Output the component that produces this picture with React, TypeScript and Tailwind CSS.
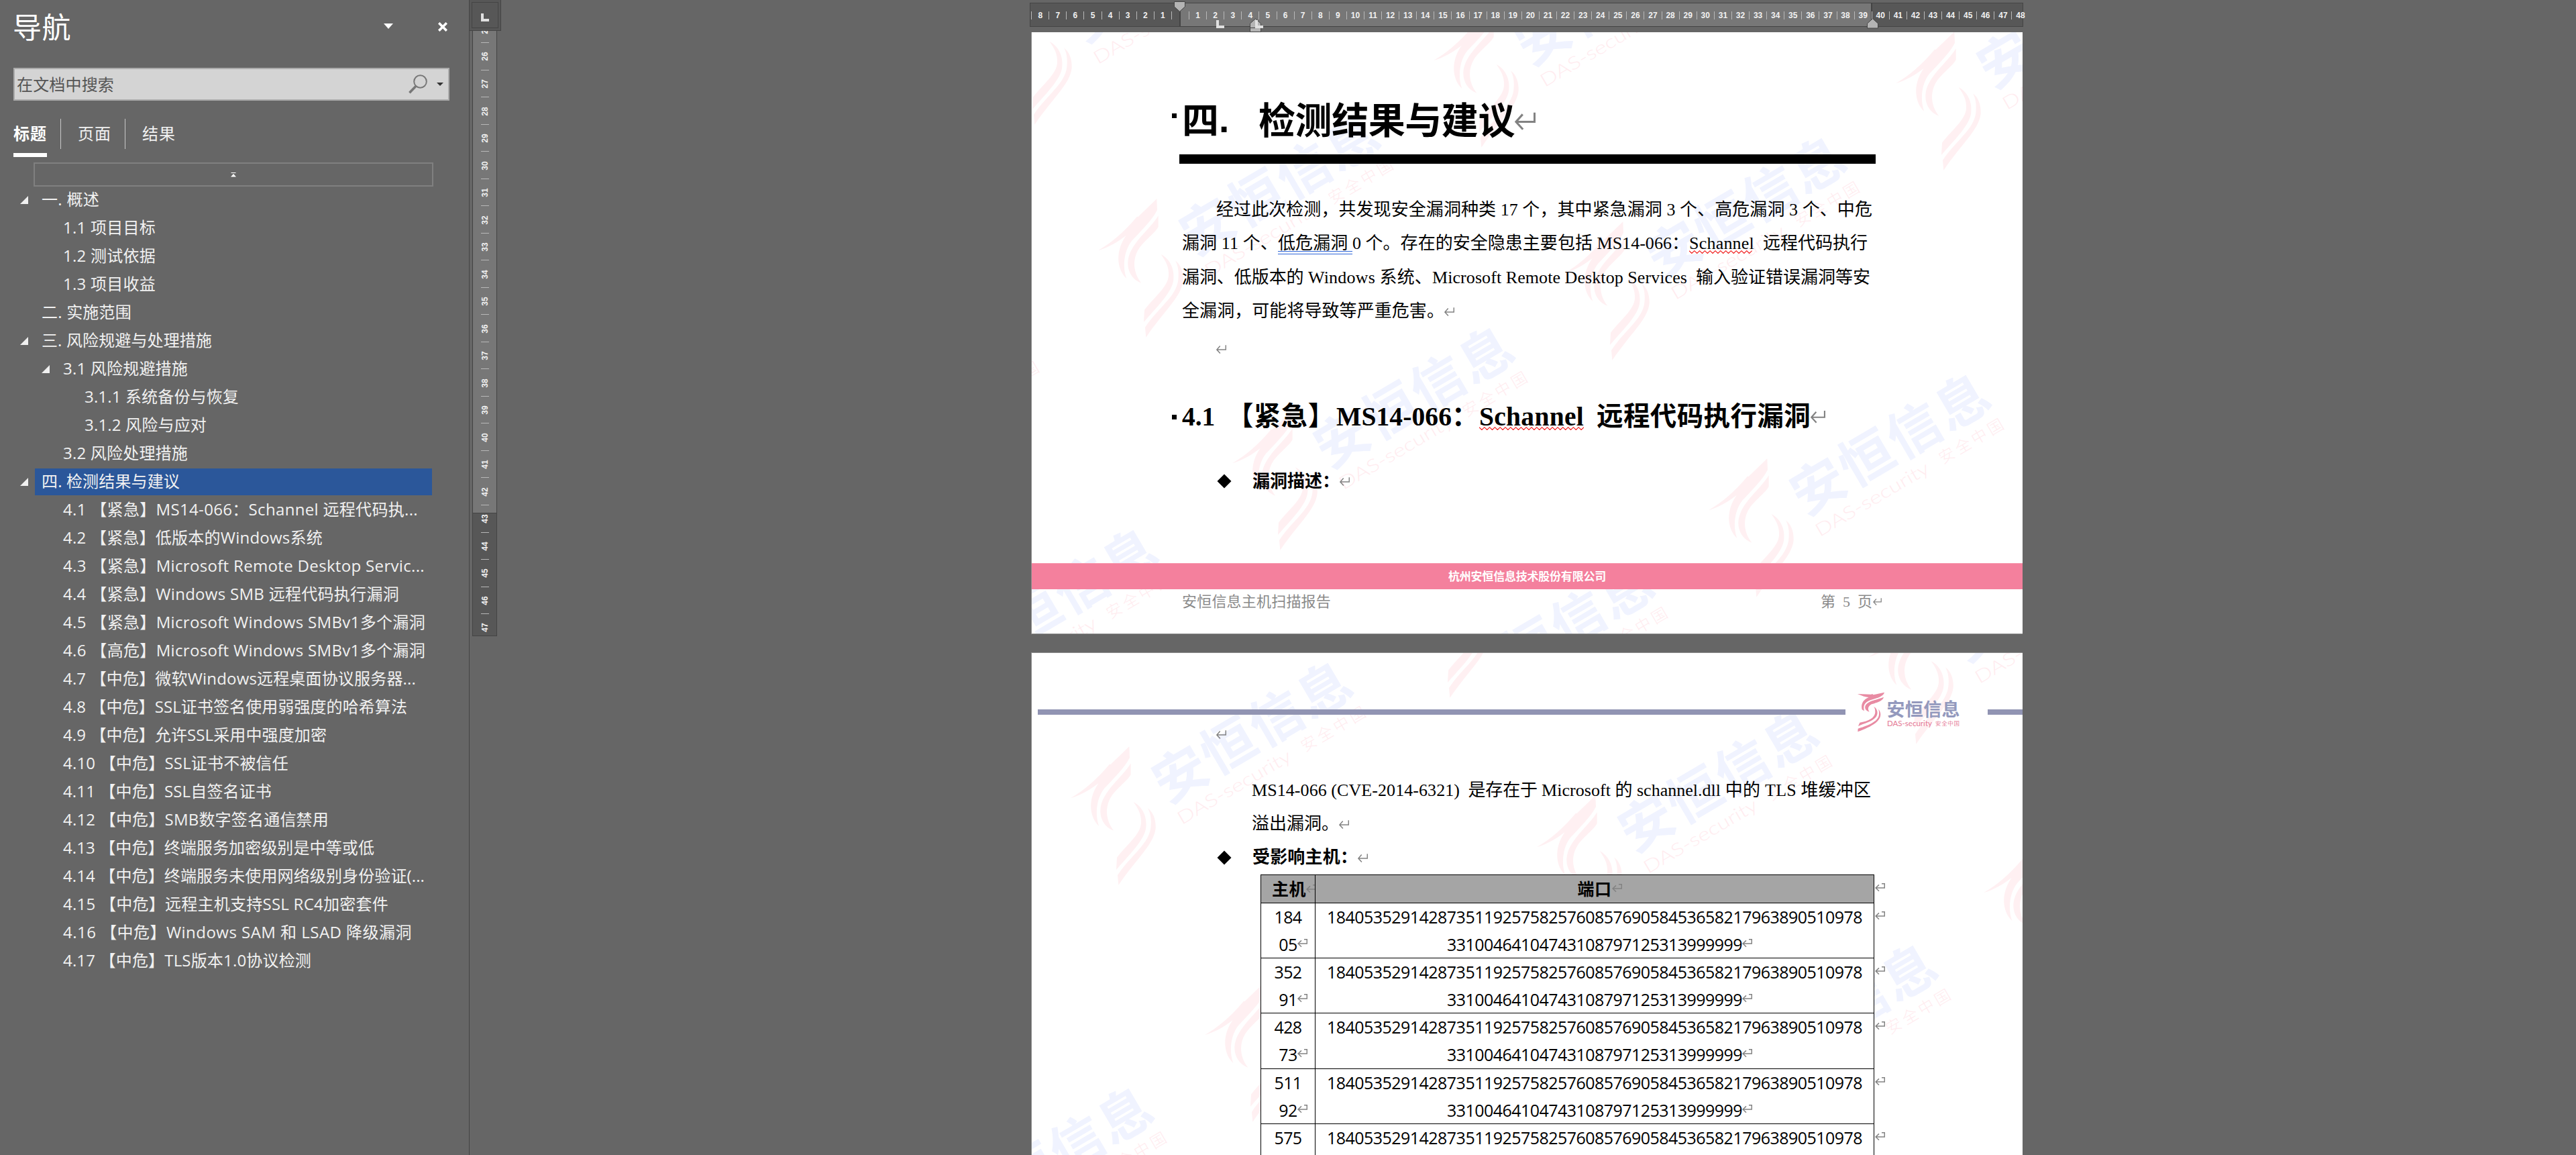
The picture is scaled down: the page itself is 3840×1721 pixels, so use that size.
import { useLayoutEffect, useRef, useState } from "react";
import type { ReactNode } from "react";
import clsx from "clsx";

const SANS = "font-['Open_Sans','Noto_Sans_CJK_SC',sans-serif]";
const CJK = "font-['Noto_Sans_CJK_SC',sans-serif]";
const SERIF = "font-['Liberation_Serif','Noto_Sans_CJK_SC',serif]";

/* Text run justified to a fixed width by spreading its letter spacing. */
function Fit({ w, n, className, children }: { w: number; n: number; className?: string; children: ReactNode }) {
  const ref = useRef<HTMLSpanElement>(null);
  const [spacing, setSpacing] = useState(0);
  useLayoutEffect(() => {
    if (ref.current) setSpacing((w - ref.current.getBoundingClientRect().width) / n);
  }, []);
  return (
    <span ref={ref} className={clsx("inline-block whitespace-pre", className)} style={{ letterSpacing: spacing }}>
      {children}
    </span>
  );
}

function T({ w, className, children }: { w: number; className?: string; children: string }) {
  return (
    <Fit w={w} n={[...children].length} className={className}>
      {children}
    </Fit>
  );
}

function Return({ className, hook }: { className?: string; hook?: boolean }) {
  return (
    <svg viewBox="0 0 15 13" fill="none" stroke="#828282" strokeWidth="1.5" className={clsx("shrink-0", className ?? "h-[13px] w-[15px]")}>
      {hook ? <path d="M10 .8H14.3V7H1M6 2.4L1 7L6 11.8" /> : <path d="M14.3 .3V7H1M5.7 1.6L.9 7L5.9 12.4" />}
    </svg>
  );
}

/* ---------- Navigation pane ---------- */

type Row = { text: string; level: 1 | 2 | 3; end: number; open?: boolean; selected?: boolean };

const rows: Row[] = [
  { text: "一. 概述", level: 1, end: 148, open: true },
  { text: "1.1 项目目标", level: 2, end: 232 },
  { text: "1.2 测试依据", level: 2, end: 232 },
  { text: "1.3 项目收益", level: 2, end: 232 },
  { text: "二. 实施范围", level: 1, end: 196 },
  { text: "三. 风险规避与处理措施", level: 1, end: 316, open: true },
  { text: "3.1 风险规避措施", level: 2, end: 280, open: true },
  { text: "3.1.1 系统备份与恢复", level: 3, end: 356 },
  { text: "3.1.2 风险与应对", level: 3, end: 308 },
  { text: "3.2 风险处理措施", level: 2, end: 280 },
  { text: "四. 检测结果与建议", level: 1, end: 268, open: true, selected: true },
  { text: "4.1 【紧急】MS14-066：Schannel 远程代码执...", level: 2, end: 623 },
  { text: "4.2 【紧急】低版本的Windows系统", level: 2, end: 481 },
  { text: "4.3 【紧急】Microsoft Remote Desktop Servic...", level: 2, end: 633 },
  { text: "4.4 【紧急】Windows SMB 远程代码执行漏洞", level: 2, end: 595 },
  { text: "4.5 【紧急】Microsoft Windows SMBv1多个漏洞", level: 2, end: 634 },
  { text: "4.6 【高危】Microsoft Windows SMBv1多个漏洞", level: 2, end: 634 },
  { text: "4.7 【中危】微软Windows远程桌面协议服务器...", level: 2, end: 620 },
  { text: "4.8 【中危】SSL证书签名使用弱强度的哈希算法", level: 2, end: 607 },
  { text: "4.9 【中危】允许SSL采用中强度加密", level: 2, end: 487 },
  { text: "4.10 【中危】SSL证书不被信任", level: 2, end: 430 },
  { text: "4.11 【中危】SSL自签名证书", level: 2, end: 405 },
  { text: "4.12 【中危】SMB数字签名通信禁用", level: 2, end: 490 },
  { text: "4.13 【中危】终端服务加密级别是中等或低", level: 2, end: 558 },
  { text: "4.14 【中危】终端服务未使用网络级别身份验证(...", level: 2, end: 633 },
  { text: "4.15 【中危】远程主机支持SSL RC4加密套件", level: 2, end: 579 },
  { text: "4.16 【中危】Windows SAM 和 LSAD 降级漏洞", level: 2, end: 614 },
  { text: "4.17 【中危】TLS版本1.0协议检测", level: 2, end: 464 },
];

const starts = { 1: 62, 2: 94, 3: 126 };

function TreeRow({ row }: { row: Row }) {
  return (
    <div className={clsx("flex h-[42px] items-center", row.level === 1 && "pl-[30px]", row.level === 2 && "pl-[62px]", row.level === 3 && "pl-[94px]")}>
      <svg viewBox="0 0 12 12" className="mr-[10px] h-3 w-3 shrink-0">
        {row.open && <path d="M12 0V12H0Z" fill="#f0f0f0" />}
      </svg>
      <div className={clsx("flex h-10 items-center pl-[10px]", row.selected && "w-[592px] bg-[#2b579a]")}>
        <T w={row.end - starts[row.level]} className="mt-[-2px] text-[24px] leading-[40px] text-[#f1f1f1]">
          {row.text}
        </T>
      </div>
    </div>
  );
}

function NavPane() {
  return (
    <aside className={clsx("w-[699px] shrink-0", SANS)}>
      <div className="flex h-[84px] items-center pl-[19px]">
        <T w={87} className="mt-[-2px] text-[43px] leading-[84px] text-white">导航</T>
        <svg viewBox="0 0 14 8" className="mt-[-6px] ml-[466px] h-2 w-[14px]">
          <path d="M0 0H14L7 8Z" fill="#fff" />
        </svg>
        <svg viewBox="0 0 14 14" className="mt-[-5px] ml-[67px] h-[14px] w-[14px]" stroke="#fff" strokeWidth="3.6">
          <path d="M1.2 1.2L12.8 12.8M12.8 1.2L1.2 12.8" />
        </svg>
      </div>
      <div className="mt-[17px] ml-5 flex h-[49px] w-[650px] items-center border-2 border-[#ababab] bg-[#d4d4d4] pl-[3px]">
        <T w={145} className="text-[24px] text-[#555]">在文档中搜索</T>
        <svg viewBox="0 0 28 29" fill="none" stroke="#777" className="ml-[439px] h-[29px] w-7">
          <circle cx="17.5" cy="10.5" r="9.3" strokeWidth="2" />
          <path d="M10.8 17.6L1.4 27.2" strokeWidth="3.6" />
        </svg>
        <svg viewBox="0 0 10 5" className="ml-[14px] h-[5px] w-[10px]">
          <path d="M0 0H10L5 5Z" fill="#333" />
        </svg>
      </div>
      <div className="ml-5 flex h-[84px] pt-[27px] text-[24px] leading-[43px] text-[#f1f1f1]">
        <div className="h-[57px] w-[50px] border-b-[6px] border-white font-bold text-white"><T w={50}>标题</T></div>
        <div className="ml-5 h-[45px] w-px bg-[#c8c8c8]" />
        <div className="ml-[25px] w-[50px]"><T w={50}>页面</T></div>
        <div className="ml-5 h-[45px] w-px bg-[#c8c8c8]" />
        <div className="ml-[25px] w-[50px]"><T w={50}>结果</T></div>
      </div>
      <div className="mt-[8px] ml-[50px] flex h-[36px] w-[596px] items-center justify-center border-2 border-[#808080]">
        <svg viewBox="0 0 8 7" className="h-[7px] w-2" fill="#fff">
          <path d="M.5 0H7.5V1H.5ZM4 2L8 6.5H0Z" />
        </svg>
      </div>
      <div className="mt-[-1px]">
        {rows.map((row) => (
          <TreeRow key={row.text} row={row} />
        ))}
      </div>
    </aside>
  );
}

/* ---------- Rulers ---------- */

function VerticalRuler() {
  const marks = Array.from({ length: 23 }, (_, i) => i + 25);
  return (
    <div className="h-[1721px] w-[49px] shrink-0 border-l border-[#444]">
      <div className="h-[46px] w-[47px] border-r border-b border-[#444] bg-[#575757] pt-[3px] pl-[3px]">
        <div className="h-[39px] w-[40px] border border-[#444] pt-[16px] pl-[13px]">
          <div className="h-[12px] w-[12px] border-b-4 border-l-4 border-[#e0e0e0]" />
        </div>
      </div>
      <div className="ml-1 h-[902px] w-[37px] overflow-hidden border-x border-b border-[#444] bg-[linear-gradient(#777_0_718px,#444_718px_719px,#575757_719px)]">
        <div className="mt-[-22.3px] flex flex-col">
          {marks.map((m) => (
            <div key={m} className="relative flex h-[40.52px] shrink-0 items-center justify-center">
              <span className="-rotate-90 font-['Liberation_Sans',sans-serif] text-[12px] leading-none font-bold text-[#f1f1f1]">{m}</span>
              {m < 47 && <div className="absolute bottom-0 left-[12px] h-px w-3 bg-[#b8b8b8]" />}
            </div>
          ))}
        </div>
      </div>
    </div>
  );
}

function TabStop({ className }: { className: string }) {
  return <div className={clsx("absolute h-3 w-3 border-b-4 border-l-4 border-[#e0e0e0]", className)} />;
}

function HorizontalRuler() {
  const marks = Array.from({ length: 57 }, (_, i) => i - 8);
  return (
    <div className="relative mt-1 ml-[787px] h-9 w-[1481px]">
      <div className="flex h-9 border border-[#444]">
        <div className="w-[222px] bg-[#575757]" />
        <div className="w-[1033px] border-x-2 border-[#444] bg-[#777]" />
        <div className="flex-1 bg-[#575757]" />
      </div>
      <div className="absolute top-[13px] left-[2.2px] flex h-3">
        {marks.map((m) => (
          <div key={m} className="flex w-[26.1px] shrink-0 items-center justify-center border-l border-[#b8b8b8] font-['Liberation_Sans',sans-serif] text-[12px] leading-none font-bold text-[#f1f1f1]">
            {m !== 0 && Math.abs(m)}
          </div>
        ))}
      </div>
      <svg viewBox="0 0 17 16" className="absolute top-[-2px] left-[215px] h-4 w-[17px]" fill="#b4b4b4" stroke="#444">
        <path d="M.5 .5H16.5V8L8.5 15.2L.5 8Z" />
      </svg>
      <svg viewBox="0 0 17 21" className="absolute top-[23px] left-[328px] h-[21px] w-[17px]" fill="#b4b4b4" stroke="#444">
        <path d="M.5 14.5V8L8.5 .8L16.5 8V14.5ZM.5 14.5H16.5V20.5H.5Z" />
      </svg>
      <svg viewBox="0 0 17 16" className="absolute top-[23px] left-[1248px] h-4 w-[17px]" fill="#b4b4b4" stroke="#444">
        <path d="M.5 15V8L8.5 .8L16.5 8V15Z" />
      </svg>
      <TabStop className="top-[26px] left-[278px]" />
      <TabStop className="top-[26px] left-[336px]" />
    </div>
  );
}

/* ---------- Brand marks ---------- */

function Stamp({ x, y }: { x: number; y: number }) {
  return (
    <g transform={`translate(${x} ${y}) scale(.33333)`}>
      <g fill="#fff0f2">
        <path d="M295 412L212 492L207 491C150 560 95 605 33 643C85 626 115 608 158 576C112 640 112 722 160 768C142 720 146 645 185 598C230 550 275 505 297 462Z" />
        <path d="M302 487C265 550 170 615 166 695C164 740 190 775 226 788C188 740 186 680 215 635C240 598 290 562 302 537Z" />
        <path d="M314 660C352 680 375 722 370 772C366 830 290 900 237 963L240 908C285 850 345 805 348 755C350 715 335 690 314 660Z" />
        <path d="M378 688C402 705 415 740 413 778C405 850 330 910 247 1031L243 987C300 900 382 850 391 775C395 735 390 710 378 688Z" />
      </g>
      <g transform="translate(531 528) rotate(-30.4)">
        <text x="-130" y="90" textLength="985" className="font-['Noto_Sans_CJK_SC',sans-serif] text-[240px] font-bold" fill="#f0f3ff">安恒信息</text>
        <text x="-119" y="202" textLength="575" lengthAdjust="spacingAndGlyphs" className="font-['Lato',sans-serif] text-[80px] font-light" fill="#ffecef">DAS-security</text>
        <text x="520" y="200" textLength="322" className="font-['Noto_Sans_CJK_SC',sans-serif] text-[70px] font-light" fill="#ffecef">安全中国</text>
      </g>
    </g>
  );
}

/* Offsets are relative to the page's top-left corner. */
function Watermarks({ at, height }: { at: [number, number][]; height: number }) {
  return (
    <svg className="absolute inset-0" width="1478" height={height} viewBox={`0 0 1478 ${height}`}>
      {at.map(([x, y]) => (
        <Stamp key={`${x},${y}`} x={x} y={y} />
      ))}
    </svg>
  );
}

const pageOneStamps: [number, number][] = [
  [88, 111], [288, 428], [783, 145], [1277, -138], [588, -172], [-78, -206], [998, 498], [-243, 729], [497, 779], [-440, 413],
];
const pageTwoStamps: [number, number][] = [
  [47, 2], [742, 75], [1236, -208], [541, -277], [1408, 143], [919, 423], [247, 355], [-250, 636],
];

function Logo() {
  return (
    <svg viewBox="0 0 152 60" className="h-[60px] w-[152px] shrink-0 overflow-visible">
      <g transform="translate(-14 -11) scale(.33333)" fill="#e88ba3">
        <path d="M162 35L113 46L108 42L103 44L42 42C60 50 78 56 92 57C66 68 56 88 62 112L72 118C66 96 72 78 104 68C132 60 158 52 162 35Z" />
        <path d="M159 56C130 68 82 74 76 98C74 110 80 118 95 122C86 110 88 98 105 88C130 80 155 74 159 56Z" />
        <path d="M114 98C130 108 134 124 128 139C118 162 75 172 45 186L52 170C90 164 118 150 121 125C121 112 120 104 114 98Z" />
        <path d="M135 110C146 120 147 136 142 148C130 176 85 196 43 211L44 197C80 186 128 170 137 140C140 125 138 118 135 110Z" />
      </g>
      <text x="43.5" y="35.5" textLength="109" className="font-['Noto_Sans_CJK_SC',sans-serif] text-[27px] font-bold" fill="#9399bd">安恒信息</text>
      <text x="44" y="50.5" textLength="67" lengthAdjust="spacingAndGlyphs" className="font-['Lato',sans-serif] text-[11.5px] font-medium" fill="#e67f9a">DAS-security</text>
      <text x="116" y="50" textLength="36" className="font-['Noto_Sans_CJK_SC',sans-serif] text-[8.5px]" fill="#e67f9a">安全中国</text>
    </svg>
  );
}

function Squiggle({ w, className }: { w: number; className: string }) {
  const step = 3.9;
  const count = Math.floor(w / step);
  const d = Array.from({ length: count + 1 }, (_, i) => `${i ? "L" : "M"}${(i * step).toFixed(1)} ${i % 2 ? 4.5 : 0.7}`).join("");
  return (
    <svg width={w} height="5" className={clsx("absolute left-0", className)} fill="none" stroke="#f01818" strokeWidth="1.1">
      <path d={d} />
    </svg>
  );
}

function Diamond() {
  return (
    <svg viewBox="0 0 22 22" className="h-[22px] w-[22px] shrink-0">
      <path d="M11 .5L21.5 11L11 21.5L.5 11Z" />
    </svg>
  );
}

/* ---------- Document ---------- */

function PageOne() {
  return (
    <section className={clsx("relative mt-2 ml-[789px] h-[897px] w-[1478px] overflow-hidden border-l border-b border-[#8c8c8c] bg-white text-black", SERIF)}>
      <Watermarks at={pageOneStamps} height={896} />
      <div className="relative flex flex-col">
        <div className={clsx("mt-[84px] flex h-24 items-center pl-[209px] text-[55px] leading-[96px] font-bold", CJK)}>
          <div className="mt-[-16px] h-[7px] w-[7px] bg-black" />
          <T w={55} className="mt-[-10px] ml-2">四</T>
          <span className="mt-[-4px] w-[59px] font-['Liberation_Sans',sans-serif]">.</span>
          <T w={382} className="mt-[-10px]">检测结果与建议</T>
          <Return className="h-[27px] w-[31px]" />
        </div>
        <div className="mt-[2px] ml-[220px] h-[14px] w-[1038px] bg-black" />
        <div className="mt-[44px] ml-[224px] text-[26px] leading-[50.33px] whitespace-pre">
          <div className="h-[50.33px] pl-[51px]"><T w={978}>经过此次检测，共发现安全漏洞种类 17 个，其中紧急漏洞 3 个、高危漏洞 3 个、中危</T></div>
          <div className="flex h-[50.33px]">
            <T w={143}>漏洞 11 个、</T>
            <div className="relative">
              <T w={111}>低危漏洞 </T>
              <div className="absolute bottom-[10px] left-0 h-[5px] w-[111px] border-y border-[#2f66d8]" />
            </div>
            <T w={502}>0 个。存在的安全隐患主要包括 MS14-066：</T>
            <div className="relative">
              <T w={97}>Schannel</T>
              <Squiggle w={97} className="top-[35px]" />
            </div>
            <T w={169}>  远程代码执行</T>
          </div>
          <div className="h-[50.33px]">
            <T w={188}>漏洞、低版本的 </T>
            <T w={100}>Windows</T>
            <T w={85}> 系统、</T>
            <T w={380}>Microsoft Remote Desktop Services</T>
            <T w={273}>  输入验证错误漏洞等安</T>
          </div>
          <div className="flex h-[50.33px] items-center"><T w={391}>全漏洞，可能将导致等严重危害。</T><Return /></div>
        </div>
        <div className="mt-[6px] flex h-[50px] items-center pl-[275px]"><Return /></div>
        <div className="mt-[46px] flex h-[60px] items-center pl-[209px] text-[39.5px] leading-[60px] font-bold">
          <div className="h-[7px] w-[7px] bg-black" />
          <T w={49} className="ml-2">4.1</T>
          <T w={161} className="ml-[18px]">【紧急】</T>
          <T w={172} className="ml-[2px]">MS14-066</T>
          <T w={41}>：</T>
          <div className="relative flex h-[60px] items-center">
            <T w={156}>Schannel</T>
            <Squiggle w={156} className="bottom-[10px]" />
          </div>
          <T w={319} className="ml-[19px]">远程代码执行漏洞</T>
          <Return className="h-[20px] w-[22px]" />
        </div>
        <div className="mt-[46px] flex h-10 items-center pl-[276px]">
          <Diamond />
          <T w={130} className="mt-[2px] ml-[31px] text-[26px] leading-10 font-bold">漏洞描述：</T>
          <Return />
        </div>
        <div className={clsx("mt-[102px] flex h-[39px] items-center justify-center border-t border-[#f799ae] bg-[#f4809d] pb-[3px] text-[17px] leading-none font-bold text-white", CJK)}>
          <T w={235}>杭州安恒信息技术股份有限公司</T>
        </div>
        <div className="flex h-9 items-center justify-between pr-[210px] pl-[224px] text-[22px] leading-9 text-[#8a8a8a]">
          <T w={222} className="mt-[2px]">安恒信息主机扫描报告</T>
          <div className="flex items-center"><T w={77} className="mt-[2px]">第  5  页</T><Return className="ml-[1px] h-[11px] w-[13px]" /></div>
        </div>
      </div>
    </section>
  );
}

const hosts = [["184", "05"], ["352", "91"], ["428", "73"], ["511", "92"], ["575", ""]];
const portA = "1840535291428735119257582576085769058453658217963890510978";
const portB = "33100464104743108797125313999999";

function HostTable() {
  return (
    <div className="ml-[341px] flex text-[25px]">
      <div className="w-[915px] border-t border-black">
        <div className={clsx("flex h-[41px] bg-[#a5a5a5] text-center leading-[41px] font-bold", CJK)}>
          <div className="flex w-[82px] shrink-0 items-center overflow-hidden border-x border-black pl-[16px]">
            <T w={51} className="mt-[-3px]">主机</T>
            <Return hook />
          </div>
          <div className="flex flex-1 items-center justify-center border-r border-black">
            <T w={51} className="mt-[-3px] ml-[15px]">端口</T>
            <Return hook className="mt-[-3px] h-[13px] w-[15px]" />
          </div>
        </div>
        {hosts.map(([a, b]) => (
          <div key={a} className={clsx("flex h-[82.2px] border-t border-black bg-white text-center leading-[40px]", SANS)}>
            <div className="w-[82px] shrink-0 border-x border-black">
              <div className="h-[41px]"><T w={41}>{a}</T></div>
              <div className="flex h-[40px] items-center justify-center pl-[15px]">
                {b && <T w={27.5}>{b}</T>}
                {b && <Return hook className="mt-[-3px] h-[13px] w-[15px]" />}
              </div>
            </div>
            <div className="flex-1 border-r border-black">
              <div className="h-[41px]"><T w={798}>{portA}</T></div>
              {b && (
                <div className="flex h-[40px] items-center justify-center pl-[15px]">
                  <T w={440}>{portB}</T>
                  <Return hook className="mt-[-3px] h-[13px] w-[15px]" />
                </div>
              )}
            </div>
          </div>
        ))}
      </div>
      <div className="ml-[1px] flex flex-col">
        <div className="flex h-[42px] items-center pb-[4px]"><Return hook /></div>
        {hosts.map(([a]) => (
          <div key={a} className="h-[82.2px] pt-[13px]"><Return hook /></div>
        ))}
      </div>
    </div>
  );
}

function PageTwo() {
  return (
    <section className={clsx("relative mt-[27px] ml-[789px] h-[750px] w-[1478px] overflow-hidden border-t border-l border-[#8c8c8c] bg-white text-black", SERIF)}>
      <Watermarks at={pageTwoStamps} height={749} />
      <div className="relative flex flex-col text-[26px]">
        <div className="mt-[58px] flex h-[60px] items-center">
          <div className="ml-[9px] h-2 w-[1204px] bg-[#9194b3]" />
          <div className="ml-[18px]"><Logo /></div>
          <div className="ml-[42px] h-2 flex-1 bg-[#9194b3]" />
        </div>
        <div className="mt-[-7px] flex h-5 items-center pl-[275px]"><Return /></div>
        <div className="mt-[49px] h-[50px] pl-[328px] leading-[49px]">
          <T w={310}>MS14-066 (CVE-2014-6321)</T>
          <T w={122}>  是存在于 </T>
          <T w={103}>Microsoft</T>
          <T w={39}> 的 </T>
          <T w={125}>schannel.dll</T>
          <T w={66}> 中的 </T>
          <T w={47}>TLS</T>
          <T w={111}> 堆缓冲区</T>
        </div>
        <div className="flex h-[50px] items-center pl-[328px] leading-[50px]"><T w={130}>溢出漏洞。</T><Return /></div>
        <div className="flex h-[50px] items-center pl-[276px]">
          <Diamond />
          <T w={157} className="ml-[31px] leading-[50px] font-bold">受影响主机：</T>
          <Return />
        </div>
        <HostTable />
      </div>
    </section>
  );
}

export default function App() {
  return (
    <div className="flex h-[1721px] w-[3840px] overflow-hidden bg-[#666]">
      <NavPane />
      <VerticalRuler />
      <main className="flex-1">
        <HorizontalRuler />
        <PageOne />
        <PageTwo />
      </main>
    </div>
  );
}
